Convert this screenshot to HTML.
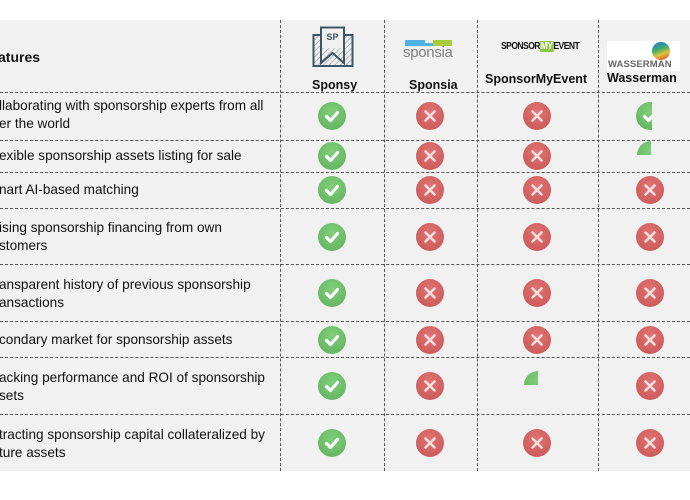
<!DOCTYPE html>
<html><head><meta charset="utf-8">
<style>
*{margin:0;padding:0;box-sizing:border-box}
body{width:690px;height:500px;background:#fff;position:relative;overflow:hidden;font-family:"Liberation Sans",sans-serif;color:#111}
#tbl{position:absolute;left:0;top:20px;width:690px;height:451px;background:#f1f1f1}
.h{position:absolute;left:0;width:690px;border-top:1px dashed #555}
.v{position:absolute;top:20px;height:451px;border-left:1px dashed #555}
.t{position:absolute;left:-1px;font-size:13.6px;line-height:18px;white-space:nowrap;color:#111}
.ic{position:absolute;width:28px;height:28px;border-radius:50%}
.ok{background:radial-gradient(circle at 50% 35%,#7fcf7a,#5fae5c)}
.no{background:radial-gradient(circle at 50% 35%,#e07373,#c85454)}
.ic svg{position:absolute;left:0;top:0}
.lbl{position:absolute;font-weight:bold;font-size:12.5px;white-space:nowrap}
</style></head><body>
<div id="tbl"></div>
<div class="h" style="top:92px"></div>
<div class="h" style="top:140px"></div>
<div class="h" style="top:172px"></div>
<div class="h" style="top:208px"></div>
<div class="h" style="top:264px"></div>
<div class="h" style="top:321px"></div>
<div class="h" style="top:357px"></div>
<div class="h" style="top:414px"></div>
<div class="v" style="left:280px"></div>
<div class="v" style="left:384px"></div>
<div class="v" style="left:477px"></div>
<div class="v" style="left:598px"></div>

<div class="t" style="top:48px;font-weight:bold;font-size:14px;left:-2px">atures</div>
<div class="t" style="top:97px">llaborating with sponsorship experts from all<br>er the world</div>
<div class="t" style="top:147px">exible sponsorship assets listing for sale</div>
<div class="t" style="top:181px">nart AI-based matching</div>
<div class="t" style="top:219px">ising sponsorship financing from own<br>stomers</div>
<div class="t" style="top:276px">ansparent history of previous sponsorship<br>ansactions</div>
<div class="t" style="top:331px">condary market for sponsorship assets</div>
<div class="t" style="top:369px">acking performance and ROI of sponsorship<br>sets</div>
<div class="t" style="top:426px">tracting sponsorship capital collateralized by<br>ture assets</div>

<svg style="position:absolute;left:311px;top:26px" width="44" height="44" viewBox="0 0 44 44">
<defs><pattern id="hp" width="4" height="4" patternUnits="userSpaceOnUse" patternTransform="rotate(45)"><line x1="0" y1="0" x2="0" y2="4" stroke="#9aa5ab" stroke-width="1.5"/></pattern></defs>
<rect x="2.5" y="9" width="39" height="31" fill="url(#hp)" stroke="#3d5663" stroke-width="2"/>
<path d="M10 1.5 H33 V37 L21.5 27 L10 37 Z" fill="#f1f1f1"/>
<path d="M10 22 V37 L21.5 27 L33 37 V22" fill="url(#hp)"/>
<path d="M10 1.5 H33 V37 L21.5 27 L10 37 Z" fill="none" stroke="#3d5663" stroke-width="2"/>
<text x="21.5" y="14" text-anchor="middle" font-family="Liberation Sans" font-weight="bold" font-size="9" fill="#3d5663">SP</text>
</svg>
<div class="lbl" style="left:312px;top:78px">Sponsy</div>

<div style="position:absolute;left:405px;top:40px;width:20px;height:6px;background:#4db3e3"></div>
<div style="position:absolute;left:425px;top:43px;width:8px;height:3px;background:#4db3e3"></div>
<div style="position:absolute;left:433px;top:40px;width:19px;height:6px;background:#a8cc3a"></div>
<div style="position:absolute;left:403px;top:44px;font-size:15px;color:#7f7f7f;letter-spacing:-0.3px">sponsia</div>
<div class="lbl" style="left:409px;top:78px">Sponsia</div>

<div style="position:absolute;left:501px;top:41px;font-size:10px;font-weight:bold;letter-spacing:-0.6px;transform:scaleX(0.85);transform-origin:left;white-space:nowrap">SPONSOR<span style="background:#8cc63f;color:#fff;padding:0 1px">MY</span>EVENT</div>
<div class="lbl" style="left:485px;top:72px">SponsorMyEvent</div>

<div style="position:absolute;left:607px;top:41px;width:73px;height:30px;background:#fff"></div>
<div style="position:absolute;left:652px;top:42px;width:18px;height:18px;border-radius:50%;background:linear-gradient(160deg,#2a7ec9 10%,#3fae6a 40%,#e3c23a 65%,#e0702f 85%)"></div>
<div style="position:absolute;left:608px;top:59px;font-size:9.5px;color:#666;font-weight:bold;letter-spacing:0.1px">WASSERMAN</div>
<div class="lbl" style="left:607px;top:71px;font-size:12.5px">Wasserman</div>

<div id="icons"></div>
<script>
var rows=[116,156,190,237,293,340,386,443];
var cols=[332,430,537,650];
var data=["oxxP","oxxQ","oxxx","oxxx","oxxx","oxxx","oxQx","oxxx"];
var ok='<svg width="28" height="28"><path d="M8.5 14.5 L12.5 18.5 L19.5 10.5" fill="none" stroke="#fff" stroke-width="3.2" stroke-linecap="round" stroke-linejoin="round"/></svg>';
var no='<svg width="28" height="28"><path d="M9.5 9.5 L18.5 18.5 M18.5 9.5 L9.5 18.5" fill="none" stroke="#f6dede" stroke-width="2.6" stroke-linecap="round"/></svg>';
var h='';
for(var r=0;r<8;r++)for(var c=0;c<4;c++){
 var ch=data[r][c],x=cols[c]-14,y=rows[r]-14;
 if(ch=='o')h+='<div class="ic ok" style="left:'+x+'px;top:'+y+'px">'+ok+'</div>';
 else if(ch=='x')h+='<div class="ic no" style="left:'+x+'px;top:'+y+'px">'+no+'</div>';
 else if(ch=='P')h+='<div style="position:absolute;left:'+x+'px;top:'+y+'px;width:16px;height:28px;overflow:hidden"><div class="ic ok" style="left:0;top:0">'+ok+'</div></div>';
 else if(ch=='Q')h+='<div style="position:absolute;left:'+(x+1)+'px;top:'+(y-1)+'px;width:14px;height:14px;overflow:hidden"><div class="ic ok" style="left:0;top:0"></div></div>';
}
document.getElementById('icons').innerHTML=h;
</script>
</body></html>
